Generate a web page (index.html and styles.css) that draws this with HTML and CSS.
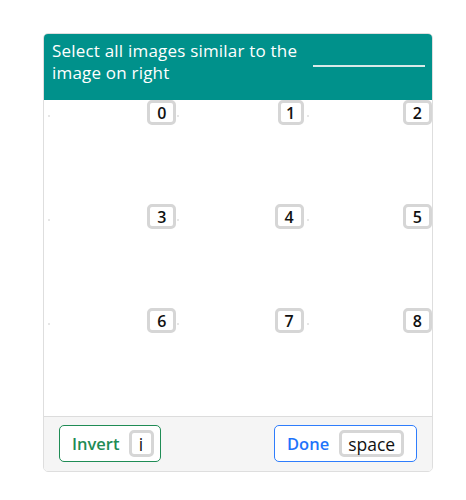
FILE: index.html
```html
<!DOCTYPE html>
<html>
<head>
<meta charset="utf-8">
<link rel="stylesheet" href="styles.css">
</head>
<body>
<div class="card">
  <div class="header">
    <div class="prompt">Select all images similar to the image on right</div>
    <div class="target"><span class="line"></span></div>
  </div>
  <div class="grid">
    <div class="cell"><span class="ph"></span><span class="key">0</span></div>
    <div class="cell"><span class="ph"></span><span class="key narrow">1</span></div>
    <div class="cell"><span class="ph"></span><span class="key">2</span></div>
    <div class="cell"><span class="ph"></span><span class="key">3</span></div>
    <div class="cell"><span class="ph"></span><span class="key">4</span></div>
    <div class="cell"><span class="ph"></span><span class="key">5</span></div>
    <div class="cell"><span class="ph"></span><span class="key">6</span></div>
    <div class="cell"><span class="ph"></span><span class="key">7</span></div>
    <div class="cell"><span class="ph"></span><span class="key">8</span></div>
  </div>
  <div class="footer">
    <button class="btn btn-green">Invert <span class="key">i</span></button>
    <button class="btn btn-blue">Done <span class="key">space</span></button>
  </div>
</div>
</body>
</html>
```
FILE: styles.css
```css
* { box-sizing: border-box; }
body {
  margin: 0;
  background: #fff;
  font-family: "Open Sans", "Noto Sans", sans-serif;
}
.card {
  margin: 33px 0 0 43px;
  width: 390px;
  border: 1px solid #dedede;
  border-radius: 5px;
  overflow: hidden;
}
.header {
  background: #00918b;
  color: #fff;
  height: 66px;
  display: flex;
  justify-content: space-between;
  padding: 6px 7px 0 8px;
}
.prompt {
  width: 262px;
  font-size: 17px;
  line-height: 22px;
  letter-spacing: 0.2px;
}
.target {
  width: 112px;
  padding-top: 25px;
}
.line {
  display: block;
  height: 2px;
  background: #d9e9e8;
}
.grid {
  display: grid;
  grid-template-columns: repeat(3, 1fr);
  grid-template-rows: repeat(3, 104px);
  height: 316px;
}
.cell {
  display: flex;
  justify-content: space-between;
  align-items: flex-start;
  padding-left: 4px;
}
.ph {
  width: 2px;
  height: 2px;
  background: #e6e6e6;
  margin-top: 15px;
}
.key {
  display: inline-flex;
  align-items: center;
  justify-content: center;
  min-width: 26px;
  height: 25px;
  padding: 0 7px;
  border: 3px solid #d6d6d6;
  border-radius: 5px;
  background: #fff;
  color: #111;
  font-size: 16px;
  font-weight: 600;
  font-family: "Open Sans", sans-serif;
}
.key.narrow { padding: 0 5px; }
.grid .cell:nth-child(3n+1) .key { margin-right: -3px; }
.grid .cell:nth-child(3n+2) .key { margin-right: -1px; }
.footer {
  border-top: 1px solid #dcdcdc;
  background: #f5f5f5;
  height: 55px;
  display: flex;
  justify-content: space-between;
  align-items: flex-start;
  padding: 8px 15px 0 15px;
}
.btn {
  display: inline-flex;
  align-items: center;
  gap: 9px;
  height: 37px;
  background: #fff;
  border-radius: 5px;
  font-family: "Open Sans", sans-serif;
  font-size: 16.5px;
  font-weight: 600;
  padding: 0 9px 0 12px;
}
.btn .key {
  height: 27px;
  font-weight: 500;
  font-size: 17.5px;
  padding: 0 4px;
  min-width: 25px;
}
.btn-green {
  border: 1px solid #1f8c55;
  color: #1f8c55;
  width: 102px;
}
.btn-blue {
  border: 1px solid #2f7dfc;
  color: #1f74fb;
  width: 143px;
  padding-right: 9px;
  gap: 10px;
}
.btn-blue .key { padding: 0 6px; }
```
